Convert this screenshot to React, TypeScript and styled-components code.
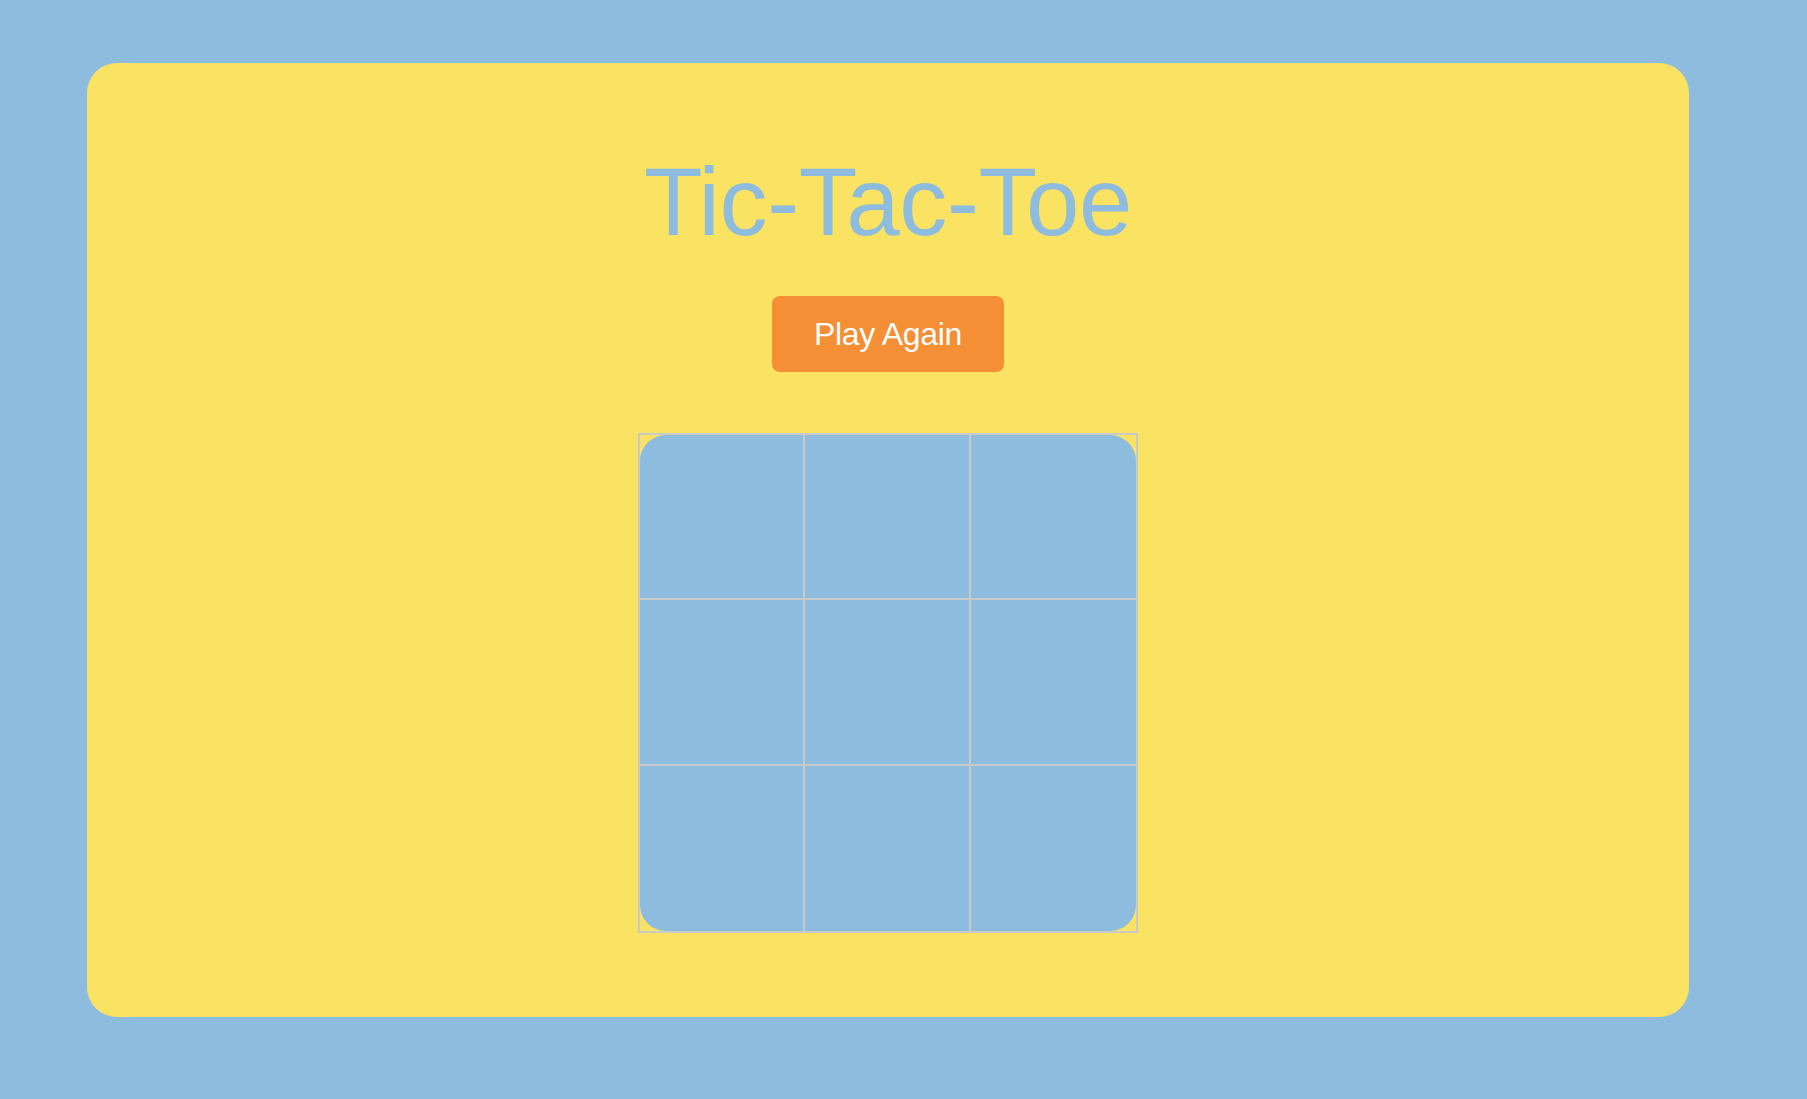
import React from 'react';
import styled, { createGlobalStyle } from 'styled-components';

const GlobalStyle = createGlobalStyle`
  html, body {
    margin: 0;
    padding: 0;
    background: #8ebcdf;
    font-family: "Liberation Sans", Arial, sans-serif;
  }
`;

const Page = styled.div`
  min-height: 1099px;
  box-sizing: border-box;
  padding: 63px 118px 82px 87px;
  display: flex;
`;

const Card = styled.main`
  flex: 1;
  height: 954px;
  box-sizing: border-box;
  background: #fae363;
  border-radius: 30px;
  display: flex;
  flex-direction: column;
  align-items: center;
  padding-top: 84px;
`;

const Title = styled.h1`
  margin: 0;
  font-size: 96px;
  line-height: 110px;
  font-weight: 400;
  letter-spacing: -0.4px;
  color: #8ebcdf;
`;

const Button = styled.button`
  margin-top: 39px;
  width: 232px;
  height: 76px;
  border: none;
  border-radius: 8px;
  background: #f48f35;
  color: #fff;
  font-family: "Liberation Sans", Arial, sans-serif;
  font-size: 32px;
  letter-spacing: -0.3px;
  cursor: pointer;
`;

const Board = styled.div`
  margin-top: 61px;
  width: 500px;
  height: 500px;
  box-sizing: border-box;
  border: 2px solid #c9c9c9;
  display: grid;
  grid-template-columns: repeat(3, 1fr);
  grid-template-rows: repeat(3, 1fr);
`;

const corners: Record<number, string> = {
  0: '26px 0 0 0',
  2: '0 26px 0 0',
  6: '0 0 0 26px',
  8: '0 0 26px 0',
};

const Cell = styled.div<{ $idx: number }>`
  background: #8ebcdf;
  box-sizing: border-box;
  border-right: ${(p) => (p.$idx % 3 < 2 ? '2px solid #c9c9c9' : 'none')};
  border-bottom: ${(p) => (p.$idx < 6 ? '2px solid #c9c9c9' : 'none')};
  border-radius: ${(p) => corners[p.$idx] ?? '0'};
`;

export default function App() {
  const cells = Array.from({ length: 9 }, (_, i) => i);
  return (
    <>
      <GlobalStyle />
      <Page>
        <Card>
          <Title>Tic-Tac-Toe</Title>
          <Button>Play Again</Button>
          <Board>
            {cells.map((i) => (
              <Cell key={i} $idx={i} />
            ))}
          </Board>
        </Card>
      </Page>
    </>
  );
}
